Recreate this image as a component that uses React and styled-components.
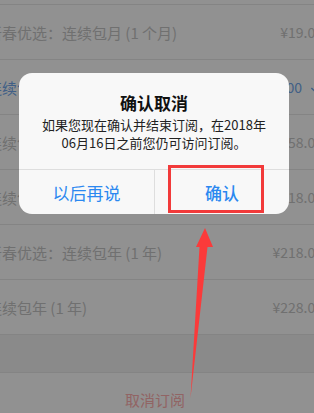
import styled, { createGlobalStyle } from "styled-components";

const Global = createGlobalStyle`
  html, body {
    margin: 0;
    padding: 0;
    background: #ffffff;
    overflow: hidden;
  }
  body {
    font-family: "Noto Sans CJK SC", "Noto Sans", sans-serif;
  }
`;

const Screen = styled.div`
  position: relative;
  width: 314px;
  height: 413px;
  overflow: hidden;
  background: #ffffff;
`;

const List = styled.div`
  margin-left: -28px;
  width: 366px;
  padding-top: 4px;
`;

const Rows = styled.div`
  border-top: 1px solid #e8e8e8;
  background: #ffffff;
`;

const Row = styled.div`
  display: flex;
  align-items: center;
  justify-content: space-between;
  height: 55px;
  box-sizing: border-box;
  padding: 0 15px;
  border-bottom: 1px solid #e8e8e8;
  font-size: 15px;
  color: ${(props) => (props.selected ? "#72a8ec" : "#c6c6c6")};
`;

const Name = styled.span`
  white-space: nowrap;
`;

const Price = styled.span`
  display: flex;
  align-items: center;
  font-size: 14px;
  white-space: nowrap;
`;

const Check = styled.svg`
  width: 13px;
  height: 13px;
  margin-left: 8px;
`;

const Gap = styled.div`
  height: 37px;
  background: #f3f3f3;
  border-bottom: 1px solid #e8e8e8;
`;

const CancelButton = styled.div`
  height: 52px;
  display: flex;
  align-items: center;
  justify-content: center;
  font-size: 15px;
  color: #ffb0b0;
  background: #ffffff;
`;

const Dim = styled.div`
  position: absolute;
  inset: 0;
  background: rgba(0, 0, 0, 0.43);
`;

const Alert = styled.div`
  position: absolute;
  left: 19px;
  top: 73px;
  width: 270px;
  border-radius: 13px;
  background: #f8f8f8;
  overflow: hidden;
  text-align: center;
`;

const AlertBody = styled.div`
  padding: 19px 14px 17px;
`;

const Title = styled.div`
  font-size: 17px;
  line-height: 22px;
  font-weight: 600;
  color: #111111;
`;

const Message = styled.div`
  margin-top: 2px;
  font-size: 13px;
  line-height: 18px;
  color: #222222;
`;

const Actions = styled.div`
  display: grid;
  grid-template-columns: 1fr 1fr;
  border-top: 1px solid #dedede;
`;

const Action = styled.div`
  height: 44px;
  display: flex;
  align-items: center;
  justify-content: center;
  font-size: 17px;
  font-weight: ${(props) => (props.strong ? 500 : 400)};
  color: #2b88f0;
  border-left: ${(props) => (props.divider ? "1px solid #dedede" : "none")};
`;

const Highlight = styled.div`
  position: absolute;
  left: 168px;
  top: 165px;
  width: 96px;
  height: 48px;
  box-sizing: border-box;
  border: 3px solid #f23a3a;
`;

const Arrow = styled.svg`
  position: absolute;
  left: 0;
  top: 0;
  width: 314px;
  height: 413px;
  pointer-events: none;
`;

const plans = [
  { name: "新春优选：连续包月 (1 个月)", price: "¥19.00" },
  { name: "连续包月 (1 个月)", price: "¥25.00", selected: true },
  { name: "连续包季 (3 个月)", price: "¥58.00" },
  { name: "连续包半年 (6 个月)", price: "¥118.00" },
  { name: "新春优选：连续包年 (1 年)", price: "¥218.00" },
  { name: "连续包年 (1 年)", price: "¥228.00" },
];

function App() {
  return (
    <Screen>
      <Global />
      <List>
        <Rows>
          {plans.map((p) => (
            <Row key={p.name} selected={p.selected}>
              <Name>{p.name}</Name>
              <Price>
                {p.price}
                {p.selected && (
                  <Check viewBox="0 0 14 14">
                    <path d="M1.5 7.5 L5.5 11.5 L12.5 2.5" fill="none" stroke="currentColor" strokeWidth="1.6" />
                  </Check>
                )}
              </Price>
            </Row>
          ))}
        </Rows>
        <Gap />
        <CancelButton>取消订阅</CancelButton>
      </List>
      <Dim />
      <Alert>
        <AlertBody>
          <Title>确认取消</Title>
          <Message>
            如果您现在确认并结束订阅，在2018年
            <br />
            06月16日之前您仍可访问订阅。
          </Message>
        </AlertBody>
        <Actions>
          <Action>以后再说</Action>
          <Action divider strong>确认</Action>
        </Actions>
      </Alert>
      <Highlight />
      <Arrow viewBox="0 0 314 413">
        <polygon points="205,228 213,247 207.5,247 190.5,398 199.5,247 196,247" fill="#fb3a3a" />
      </Arrow>
    </Screen>
  );
}

export default App;
